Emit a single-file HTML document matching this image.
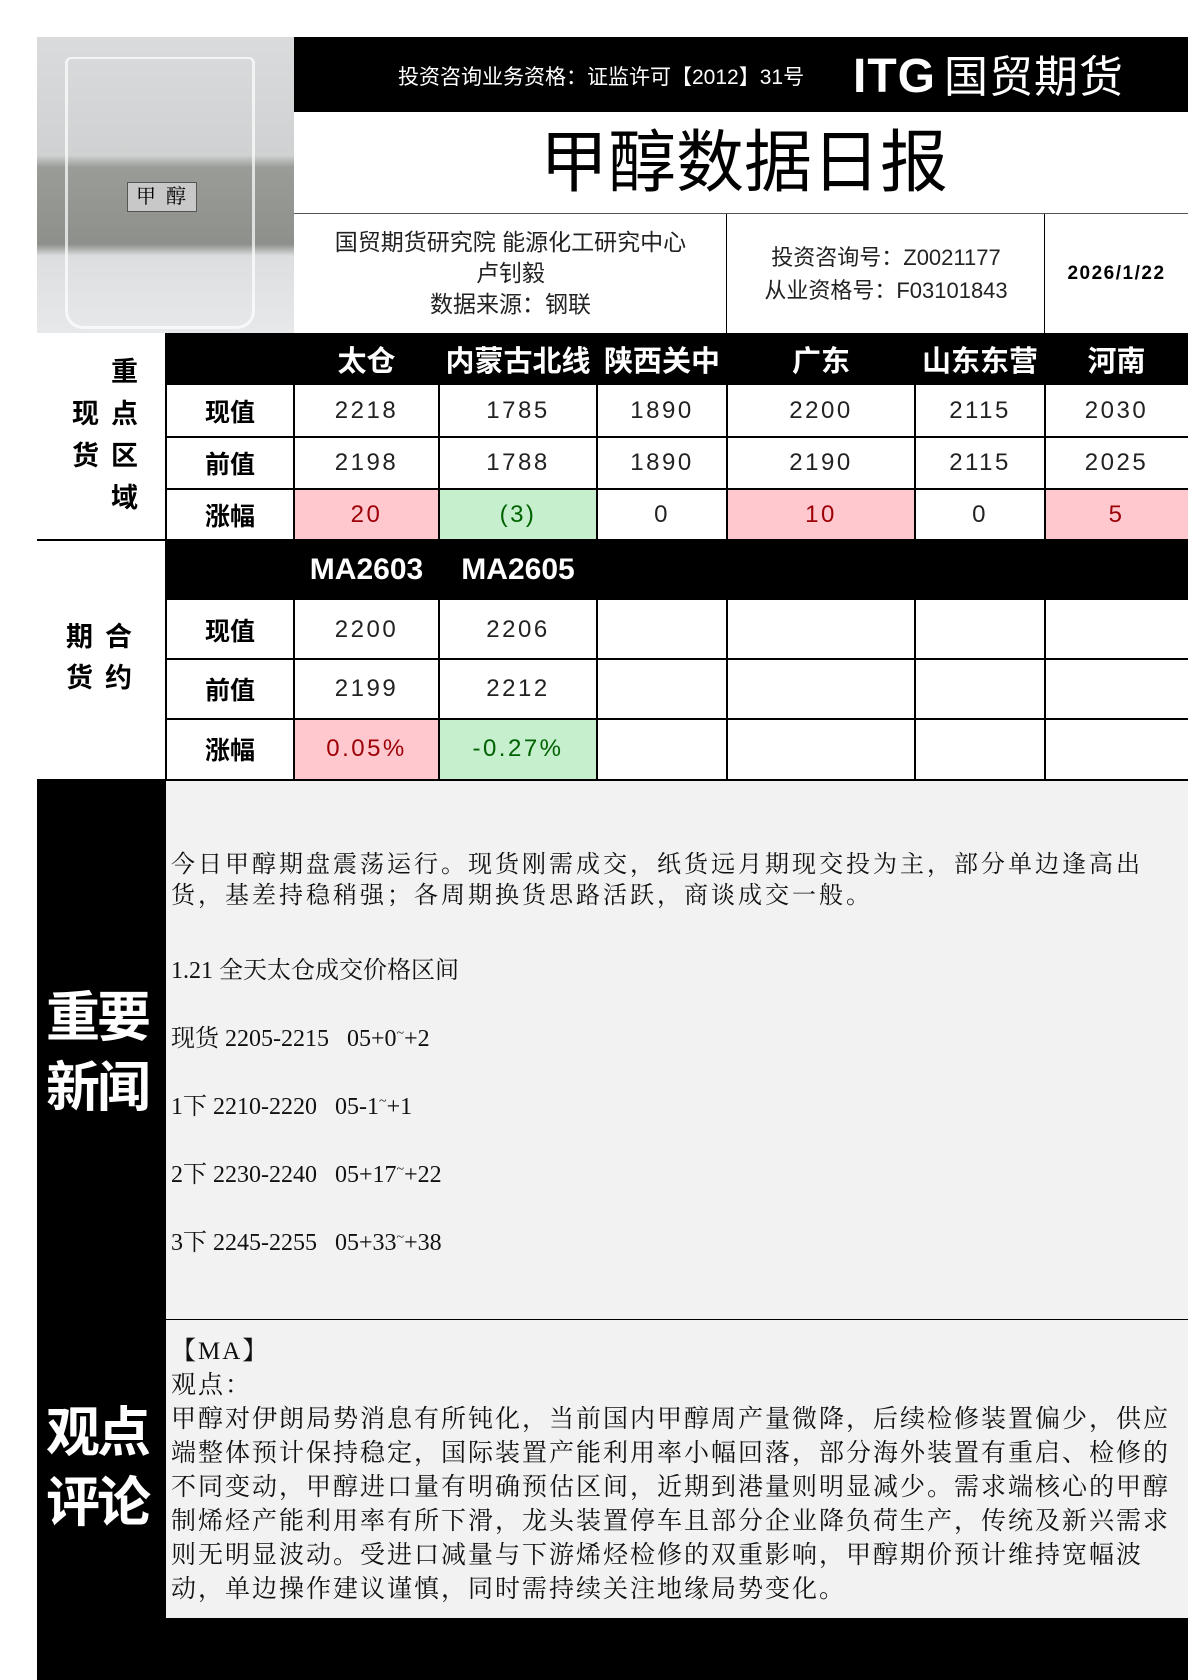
<!DOCTYPE html>
<html><head><meta charset="utf-8">
<style>
*{margin:0;padding:0;box-sizing:border-box}
body{width:1188px;height:1680px;background:#fff;position:relative;overflow:hidden;font-family:"Liberation Sans","Noto Sans CJK SC",sans-serif;color:#000}
.a{position:absolute}
.blk{background:#000}
.c{display:flex;align-items:center;justify-content:center;text-align:center}
.hl{position:absolute;height:2px;background:#000}
.vl{position:absolute;width:2px;background:#000}
.num{font-size:24px;letter-spacing:2.5px;color:#222}
.lab{font-size:25px;font-weight:bold}
.hd{color:#fff;font-size:29px;font-weight:bold}
.serif{font-family:"Liberation Serif","Noto Serif CJK SC",serif}
.t{position:relative;top:-9px;font-size:14px;line-height:0}
</style></head><body>
<!-- beaker image -->
<div class="a" style="left:37px;top:37px;width:257px;height:296px;background:linear-gradient(180deg,#d9dbdc 0%,#cfd1d2 40%,#9a9c98 44%,#8e908c 70%,#dcdee0 74%,#e6e8ea 100%)">
  <div class="a" style="left:28px;top:20px;width:190px;height:272px;border:3px solid rgba(255,255,255,.7);border-top-width:2px;border-radius:6px 6px 18px 18px"></div>
  <div class="a serif" style="left:90px;top:145px;width:70px;height:30px;background:#c8c8c8;border:1px solid #555;font-size:20px;line-height:28px;padding-left:8px">甲&nbsp;&nbsp;醇</div>
</div>
<!-- header -->
<div class="a blk" style="left:294px;top:37px;width:894px;height:75px"></div>
<div class="a" style="left:398px;top:61px;color:#fff;font-size:21px">投资咨询业务资格：证监许可【2012】31号</div>
<div class="a" style="left:853px;top:41px;color:#fff;font-size:48px;font-weight:bold;letter-spacing:1px;white-space:nowrap">ITG<span style="font-size:44px;font-weight:normal;margin-left:8px">国贸期货</span></div>
<div class="a" style="left:294px;top:112px;width:894px;height:102px;font-size:68px;line-height:102px;padding-left:246px;white-space:nowrap">甲醇数据日报</div>
<div class="hl" style="left:294px;top:213px;width:894px;height:1px;background:#555"></div>
<div class="a c" style="left:294px;top:214px;width:433px;height:119px;font-size:23px;line-height:31px;color:#222">国贸期货研究院 能源化工研究中心<br>卢钊毅<br>数据来源：钢联</div>
<div class="vl" style="left:726px;top:214px;height:119px;width:1px"></div>
<div class="a c" style="left:727px;top:214px;width:318px;height:119px;font-size:22px;line-height:33px;color:#222">投资咨询号：Z0021177<br>从业资格号：F03101843</div>
<div class="vl" style="left:1044px;top:214px;height:119px;width:1px"></div>
<div class="a c" style="left:1045px;top:214px;width:143px;height:119px;font-size:19px;font-weight:bold;letter-spacing:1.5px;white-space:nowrap">2026/1/22</div>

<!-- spot table -->
<div class="a blk" style="left:166px;top:333px;width:1022px;height:52px"></div>
<div class="a c hd" style="left:294px;top:333px;width:145px;height:52px">太仓</div>
<div class="a c hd" style="left:439px;top:333px;width:158px;height:52px">内蒙古北线</div>
<div class="a c hd" style="left:597px;top:333px;width:130px;height:52px">陕西关中</div>
<div class="a c hd" style="left:727px;top:333px;width:188px;height:52px">广东</div>
<div class="a c hd" style="left:915px;top:333px;width:130px;height:52px">山东东营</div>
<div class="a c hd" style="left:1045px;top:333px;width:143px;height:52px">河南</div>

<div class="a" style="left:294px;top:489px;width:145px;height:51px;background:#ffc7ce"></div>
<div class="a" style="left:439px;top:489px;width:158px;height:51px;background:#c6efce"></div>
<div class="a" style="left:727px;top:489px;width:188px;height:51px;background:#ffc7ce"></div>
<div class="a" style="left:1045px;top:489px;width:143px;height:51px;background:#ffc7ce"></div>

<div class="a c lab" style="left:166px;top:385px;width:128px;height:52px">现值</div>
<div class="a c lab" style="left:166px;top:437px;width:128px;height:52px">前值</div>
<div class="a c lab" style="left:166px;top:489px;width:128px;height:51px">涨幅</div>
<div class="a lab" style="left:60px;top:351px;font-size:27px;line-height:42px;width:90px;text-align:right;letter-spacing:12px;white-space:nowrap">重<br>现点<br>货区<br>域</div>

<div class="a c num" style="left:294px;top:385px;width:145px;height:52px">2218</div>
<div class="a c num" style="left:439px;top:385px;width:158px;height:52px">1785</div>
<div class="a c num" style="left:597px;top:385px;width:130px;height:52px">1890</div>
<div class="a c num" style="left:727px;top:385px;width:188px;height:52px">2200</div>
<div class="a c num" style="left:915px;top:385px;width:130px;height:52px">2115</div>
<div class="a c num" style="left:1045px;top:385px;width:143px;height:52px">2030</div>
<div class="a c num" style="left:294px;top:437px;width:145px;height:52px">2198</div>
<div class="a c num" style="left:439px;top:437px;width:158px;height:52px">1788</div>
<div class="a c num" style="left:597px;top:437px;width:130px;height:52px">1890</div>
<div class="a c num" style="left:727px;top:437px;width:188px;height:52px">2190</div>
<div class="a c num" style="left:915px;top:437px;width:130px;height:52px">2115</div>
<div class="a c num" style="left:1045px;top:437px;width:143px;height:52px">2025</div>
<div class="a c num" style="left:294px;top:489px;width:145px;height:51px;color:#9c0006">20</div>
<div class="a c num" style="left:439px;top:489px;width:158px;height:51px;color:#006100">(3)</div>
<div class="a c num" style="left:597px;top:489px;width:130px;height:51px">0</div>
<div class="a c num" style="left:727px;top:489px;width:188px;height:51px;color:#9c0006">10</div>
<div class="a c num" style="left:915px;top:489px;width:130px;height:51px">0</div>
<div class="a c num" style="left:1045px;top:489px;width:143px;height:51px;color:#9c0006">5</div>

<div class="hl" style="left:166px;top:436px;width:1022px"></div>
<div class="hl" style="left:166px;top:488px;width:1022px"></div>
<div class="hl" style="left:37px;top:539px;width:1151px"></div>
<div class="vl" style="left:165px;top:333px;height:448px"></div>
<div class="vl" style="left:293px;top:385px;height:155px"></div>
<div class="vl" style="left:438px;top:385px;height:155px"></div>
<div class="vl" style="left:596px;top:385px;height:155px"></div>
<div class="vl" style="left:726px;top:385px;height:155px"></div>
<div class="vl" style="left:914px;top:385px;height:155px"></div>
<div class="vl" style="left:1044px;top:385px;height:155px"></div>

<!-- futures -->
<div class="a blk" style="left:166px;top:540px;width:1022px;height:60px"></div>
<div class="a c hd" style="left:294px;top:540px;width:145px;height:60px;font-size:30px">MA2603</div>
<div class="a c hd" style="left:439px;top:540px;width:158px;height:60px;font-size:30px">MA2605</div>
<div class="a" style="left:294px;top:719px;width:145px;height:60px;background:#ffc7ce"></div>
<div class="a" style="left:439px;top:719px;width:158px;height:60px;background:#c6efce"></div>
<div class="a c lab" style="left:166px;top:600px;width:128px;height:59px">现值</div>
<div class="a c lab" style="left:166px;top:659px;width:128px;height:60px">前值</div>
<div class="a c lab" style="left:166px;top:719px;width:128px;height:60px">涨幅</div>
<div class="a lab" style="left:66px;top:617px;font-size:27px;line-height:41px;letter-spacing:12px;white-space:nowrap">期合<br>货约</div>
<div class="a c num" style="left:294px;top:600px;width:145px;height:59px">2200</div>
<div class="a c num" style="left:439px;top:600px;width:158px;height:59px">2206</div>
<div class="a c num" style="left:294px;top:659px;width:145px;height:60px">2199</div>
<div class="a c num" style="left:439px;top:659px;width:158px;height:60px">2212</div>
<div class="a c num" style="left:294px;top:719px;width:145px;height:60px;color:#9c0006">0.05%</div>
<div class="a c num" style="left:439px;top:719px;width:158px;height:60px;color:#006100">-0.27%</div>
<div class="hl" style="left:166px;top:658px;width:1022px"></div>
<div class="hl" style="left:166px;top:718px;width:1022px"></div>
<div class="vl" style="left:293px;top:600px;height:180px"></div>
<div class="vl" style="left:438px;top:600px;height:180px"></div>
<div class="vl" style="left:596px;top:600px;height:180px"></div>
<div class="vl" style="left:726px;top:600px;height:180px"></div>
<div class="vl" style="left:914px;top:600px;height:180px"></div>
<div class="vl" style="left:1044px;top:600px;height:180px"></div>

<!-- news -->
<div class="a blk" style="left:37px;top:779px;width:1151px;height:901px"></div>
<div class="a" style="left:166px;top:781px;width:1022px;height:538px;background:#f2f2f2"></div>
<div class="a" style="left:166px;top:1320px;width:1022px;height:298px;background:#f2f2f2"></div>
<div class="a" style="left:166px;top:1319px;width:1022px;height:1px;background:#000"></div>
<div class="a" style="left:46px;top:983px;color:#fff;font-size:54px;font-weight:bold;line-height:70px;letter-spacing:-3px;white-space:nowrap">重要<br>新闻</div>
<div class="a" style="left:46px;top:1398px;color:#fff;font-size:54px;font-weight:bold;line-height:70px;letter-spacing:-3px;white-space:nowrap">观点<br>评论</div>
<div class="a serif" style="left:171px;top:850px;font-size:24px;line-height:31px;letter-spacing:3px;white-space:nowrap;color:#111">今日甲醇期盘震荡运行。现货刚需成交，纸货远月期现交投为主，部分单边逢高出<br>货，基差持稳稍强；各周期换货思路活跃，商谈成交一般。</div>
<div class="a serif" style="left:171px;top:937px;font-size:24px;line-height:68px;white-space:nowrap;color:#111">1.21 全天太仓成交价格区间<br>现货 2205-2215&nbsp;&nbsp; 05+0<span class="t">~</span>+2<br>1下 2210-2220&nbsp;&nbsp; 05-1<span class="t">~</span>+1<br>2下 2230-2240&nbsp;&nbsp; 05+17<span class="t">~</span>+22<br>3下 2245-2255&nbsp;&nbsp; 05+33<span class="t">~</span>+38</div>
<div class="a serif" style="left:171px;top:1335px;font-size:25px;line-height:34px;letter-spacing:2px;white-space:nowrap;color:#111">【MA】<br>观点：<br>甲醇对伊朗局势消息有所钝化，当前国内甲醇周产量微降，后续检修装置偏少，供应<br>端整体预计保持稳定，国际装置产能利用率小幅回落，部分海外装置有重启、检修的<br>不同变动，甲醇进口量有明确预估区间，近期到港量则明显减少。需求端核心的甲醇<br>制烯烃产能利用率有所下滑，龙头装置停车且部分企业降负荷生产，传统及新兴需求<br>则无明显波动。受进口减量与下游烯烃检修的双重影响，甲醇期价预计维持宽幅波<br>动，单边操作建议谨慎，同时需持续关注地缘局势变化。</div>
</body></html>
